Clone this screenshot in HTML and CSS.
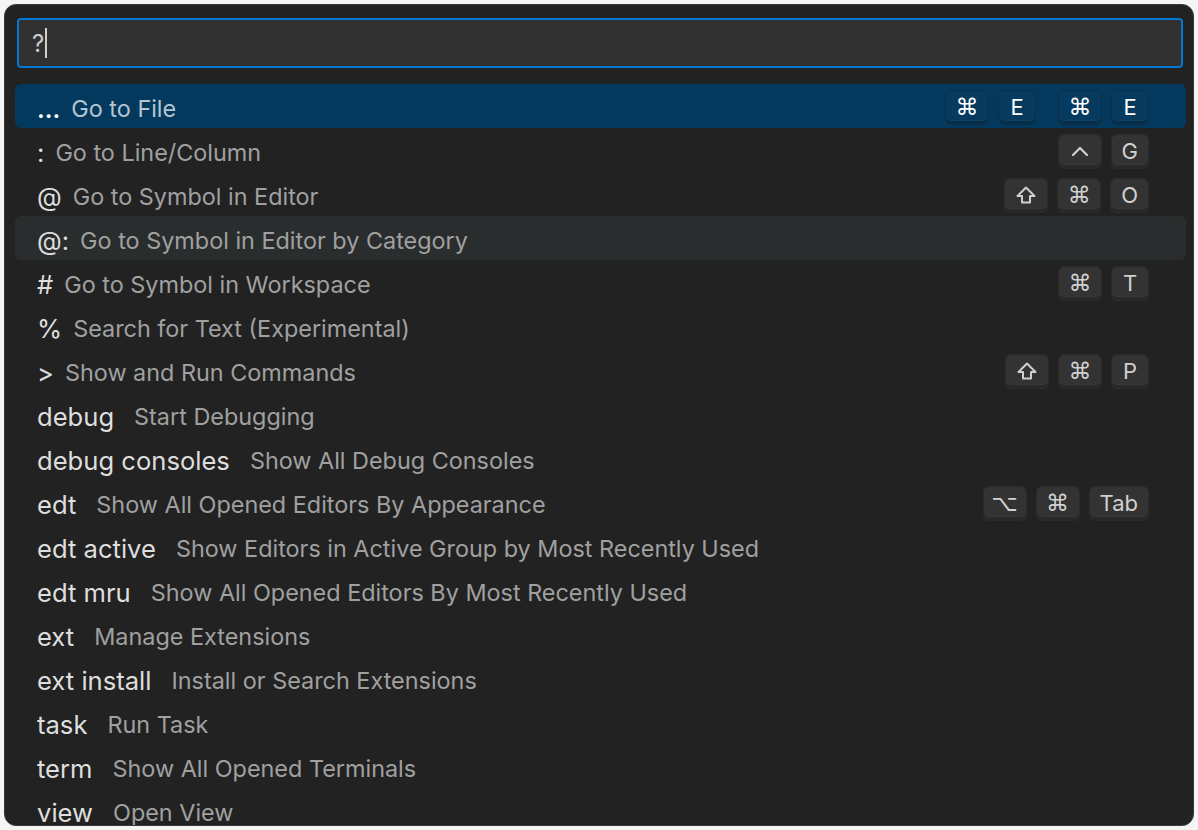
FILE: index.html
```html
<!DOCTYPE html>
<html>
<head>
<meta charset="utf-8">
<link rel="stylesheet" href="styles.css">
</head>
<body>
<div class="panel">
  <div class="input"><span class="value">?</span><span class="caret"></span></div>
  <div class="list">
    <div class="row selected">
      <span class="label">...</span><span class="desc prefix">Go to File</span>
      <div class="keys">
        <div class="chord"><kbd class="sym">⌘</kbd><kbd>E</kbd></div>
        <div class="chord"><kbd class="sym">⌘</kbd><kbd>E</kbd></div>
      </div>
    </div>
    <div class="row">
      <span class="label">:</span><span class="desc prefix">Go to Line/Column</span>
      <div class="keys"><div class="chord"><kbd class="sym"><svg class="icon" viewBox="0 0 20 14" width="20" height="14"><path d="M3 11 L10 4 L17 11" fill="none" stroke="currentColor" stroke-width="2.2" stroke-linecap="round" stroke-linejoin="round"/></svg></kbd><kbd>G</kbd></div></div>
    </div>
    <div class="row">
      <span class="label">@</span><span class="desc prefix">Go to Symbol in Editor</span>
      <div class="keys"><div class="chord"><kbd class="sym"><svg class="icon" viewBox="0 0 22 20" width="22" height="20"><path d="M11 2.5 L19.5 11 L15 11 L15 17.5 L7 17.5 L7 11 L2.5 11 Z" fill="none" stroke="currentColor" stroke-width="2" stroke-linejoin="round"/></svg></kbd><kbd class="sym">⌘</kbd><kbd>O</kbd></div></div>
    </div>
    <div class="row hover">
      <span class="label">@:</span><span class="desc prefix">Go to Symbol in Editor by Category</span>
    </div>
    <div class="row">
      <span class="label">#</span><span class="desc prefix">Go to Symbol in Workspace</span>
      <div class="keys"><div class="chord"><kbd class="sym">⌘</kbd><kbd>T</kbd></div></div>
    </div>
    <div class="row">
      <span class="label">%</span><span class="desc prefix">Search for Text (Experimental)</span>
    </div>
    <div class="row">
      <span class="label">&gt;</span><span class="desc prefix">Show and Run Commands</span>
      <div class="keys"><div class="chord"><kbd class="sym"><svg class="icon" viewBox="0 0 22 20" width="22" height="20"><path d="M11 2.5 L19.5 11 L15 11 L15 17.5 L7 17.5 L7 11 L2.5 11 Z" fill="none" stroke="currentColor" stroke-width="2" stroke-linejoin="round"/></svg></kbd><kbd class="sym">⌘</kbd><kbd>P</kbd></div></div>
    </div>
    <div class="row"><span class="label">debug</span><span class="desc">Start Debugging</span></div>
    <div class="row"><span class="label">debug consoles</span><span class="desc">Show All Debug Consoles</span></div>
    <div class="row">
      <span class="label">edt</span><span class="desc">Show All Opened Editors By Appearance</span>
      <div class="keys"><div class="chord"><kbd class="sym">⌥</kbd><kbd class="sym">⌘</kbd><kbd>Tab</kbd></div></div>
    </div>
    <div class="row"><span class="label">edt active</span><span class="desc">Show Editors in Active Group by Most Recently Used</span></div>
    <div class="row"><span class="label">edt mru</span><span class="desc">Show All Opened Editors By Most Recently Used</span></div>
    <div class="row"><span class="label">ext</span><span class="desc">Manage Extensions</span></div>
    <div class="row"><span class="label">ext install</span><span class="desc">Install or Search Extensions</span></div>
    <div class="row"><span class="label">task</span><span class="desc">Run Task</span></div>
    <div class="row"><span class="label">term</span><span class="desc">Show All Opened Terminals</span></div>
    <div class="row"><span class="label">view</span><span class="desc">Open View</span></div>
  </div>
</div>
</body>
</html>
```
FILE: styles.css
```css
html, body {
  margin: 0;
  padding: 0;
  background: #f5f5f5;
}
body {
  font-family: "Inter", "DejaVu Sans", sans-serif;
  padding: 4px;
  box-sizing: border-box;
  height: 830px;
}
.panel {
  width: 1190px;
  height: 822px;
  box-sizing: border-box;
  background: #222222;
  border: 1px solid #3a3a3a;
  border-radius: 12px;
  overflow: hidden;
  display: flex;
  flex-direction: column;
}
.input {
  flex: none;
  margin: 13px 10px 0 12px;
  height: 50px;
  box-sizing: border-box;
  border: 2px solid #0078d4;
  border-radius: 4px;
  background: #313131;
  display: flex;
  align-items: center;
  padding-left: 13px;
  color: #cccccc;
  font-size: 24px;
}
.caret {
  width: 1.5px;
  height: 30px;
  background: #d0d0d0;
  margin-left: 1px;
}
.list {
  flex: none;
  margin: 16px 7px 0 10px;
  display: flex;
  flex-direction: column;
}
.row {
  height: 44px;
  flex: none;
  box-sizing: border-box;
  display: flex;
  align-items: center;
  padding: 4px 37px 0 22px;
  border-radius: 6px;
  white-space: nowrap;
}
.row.selected { background: #04395e; }
.row.hover { background: #2a2d2e; }
.label {
  font-size: 25.6px;
  color: #dedede;
}
.desc {
  font-size: 23.4px;
  color: #a0a0a0;
  margin-left: 20px;
}
.desc.prefix { margin-left: 11px; }
.selected .label { color: #ffffff; font-weight: 500; }
.selected .desc { color: #b4c5d2; margin-left: 11px; }
.keys {
  margin-left: auto;
  display: flex;
  gap: 22px;
  margin-top: -2px;
}
.chord {
  display: flex;
  gap: 9px;
}
kbd {
  font-family: "Inter", "DejaVu Sans", sans-serif;
  font-size: 22px;
  height: 35px;
  min-width: 38px;
  box-sizing: border-box;
  padding: 0 10px 1px;
  display: flex;
  align-items: center;
  justify-content: center;
  border-radius: 6px;
  background: #333333;
  border: 1px solid #2b2b2b;
  box-shadow: inset 0 -3px 0 #282828, inset 0 -4px 0 #383838;
  color: #d0d0d0;
}
kbd.sym {
  width: 44px;
  padding: 0 0 1px;
  font-size: 23px;
  font-family: "DejaVu Sans", sans-serif;
}
.icon { display: block; }
.selected kbd {
  background: #063a5e;
  border-color: #0a2f4a;
  box-shadow: inset 0 -3px 0 #082e4a, inset 0 -4px 0 #0b4068;
  color: #ffffff;
}
```
